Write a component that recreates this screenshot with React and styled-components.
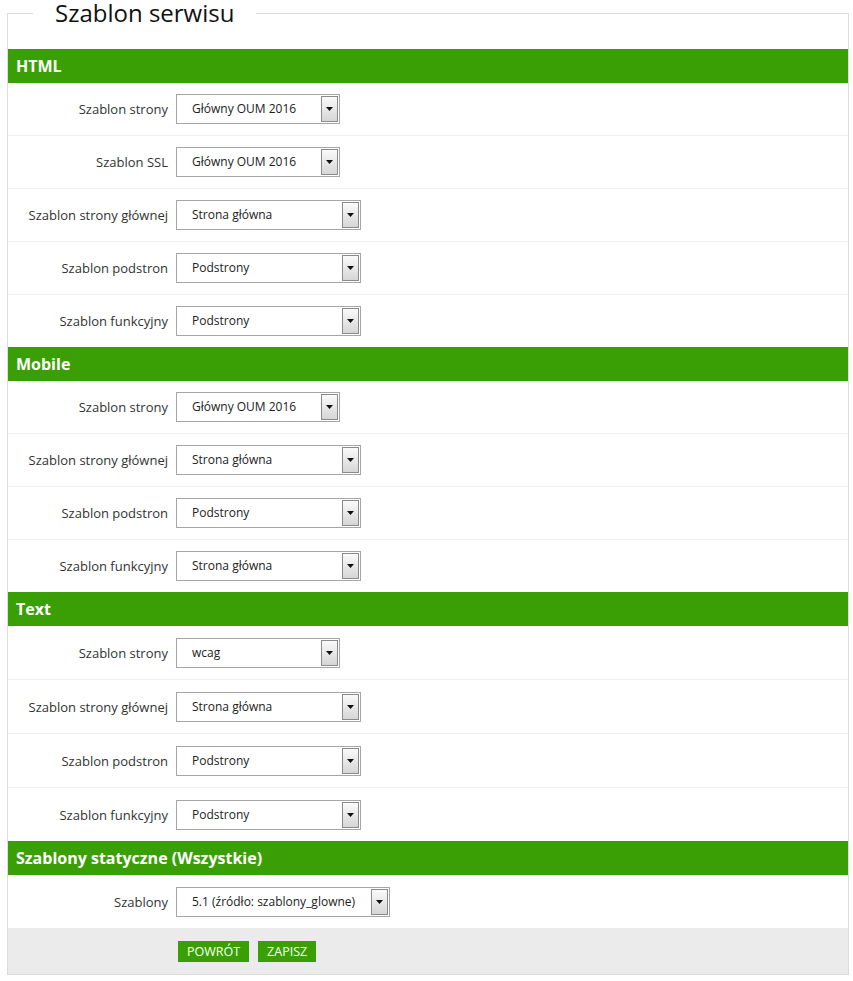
import React from 'react'
import styled, { createGlobalStyle } from 'styled-components'

const Global = createGlobalStyle`
  body {
    margin: 0;
    background: #fff;
    font-family: "Open Sans", "DejaVu Sans", sans-serif;
    color: #333;
  }
`

const sections = [
  {
    title: 'HTML',
    rowHeight: 52,
    rows: [
      ['Szablon strony', 'Główny OUM 2016', 164],
      ['Szablon SSL', 'Główny OUM 2016', 164],
      ['Szablon strony głównej', 'Strona główna', 185],
      ['Szablon podstron', 'Podstrony', 185],
      ['Szablon funkcyjny', 'Podstrony', 185],
    ],
  },
  {
    title: 'Mobile',
    rowHeight: 52,
    rows: [
      ['Szablon strony', 'Główny OUM 2016', 164],
      ['Szablon strony głównej', 'Strona główna', 185],
      ['Szablon podstron', 'Podstrony', 185],
      ['Szablon funkcyjny', 'Strona główna', 185],
    ],
  },
  {
    title: 'Text',
    rowHeight: 53,
    rows: [
      ['Szablon strony', 'wcag', 164],
      ['Szablon strony głównej', 'Strona główna', 185],
      ['Szablon podstron', 'Podstrony', 185],
      ['Szablon funkcyjny', 'Podstrony', 185],
    ],
  },
  {
    title: 'Szablony statyczne (Wszystkie)',
    rowHeight: 53,
    rows: [['Szablony', '5.1 (źródło: szablony_glowne)', 214]],
  },
]

function Select({ value, width }) {
  return (
    <SelectBox $width={width}>
      <SelectValue>{value}</SelectValue>
      <Arrow>
        <svg width="7" height="4" viewBox="0 0 7 4">
          <path d="M0 0h7L3.5 4z" fill="#111" />
        </svg>
      </Arrow>
    </SelectBox>
  )
}

function App() {
  return (
    <Page>
      <Global />
      <Fieldset>
        <Legend>Szablon serwisu</Legend>
        <Body>
          {sections.map((s) => (
            <Section key={s.title}>
              <Header>{s.title}</Header>
              {s.rows.map(([label, value, w], i) => (
                <Row key={i} $height={s.rowHeight}>
                  <Label>{label}</Label>
                  <Select value={value} width={w} />
                </Row>
              ))}
            </Section>
          ))}
          <Footer>
            <Button>Powrót</Button>
            <Button>Zapisz</Button>
          </Footer>
        </Body>
      </Fieldset>
    </Page>
  )
}

export default App

const Page = styled.div`
  padding: 0 4px 6px 7px;
`

const Fieldset = styled.fieldset`
  margin: 0;
  padding: 0;
  width: 842px;
  box-sizing: border-box;
  border: 1px solid #dcdcdc;
  min-width: 0;
`

const Legend = styled.legend`
  margin-left: 25px;
  padding: 0 22px;
  font-size: 24px;
  font-weight: 500;
  line-height: 26px;
  color: #111;
`

const Body = styled.div`
  padding-top: 23px;
`

const Section = styled.div`
  display: flex;
  flex-direction: column;
`

const Header = styled.div`
  height: 34px;
  background: #3a9f04;
  color: #fff;
  font-weight: 700;
  font-size: 16px;
  line-height: 34px;
  padding-left: 8px;
`

const Row = styled.div`
  display: grid;
  grid-template-columns: 160px auto;
  column-gap: 8px;
  align-items: center;
  height: ${(p) => p.$height}px;
  & + & {
    border-top: 1px solid #eeeeee;
  }
`

const Label = styled.div`
  text-align: right;
  font-size: 13px;
`

const SelectBox = styled.div`
  display: flex;
  align-items: stretch;
  width: ${(p) => p.$width}px;
  height: 30px;
  box-sizing: border-box;
  border: 1px solid #a6a6a6;
  background: #fff;
`

const SelectValue = styled.div`
  flex: 1;
  padding-left: 15px;
  font-size: 12px;
  line-height: 28px;
  color: #222;
  white-space: nowrap;
  overflow: hidden;
`

const Arrow = styled.div`
  width: 15px;
  margin: 1px;
  border: 1px solid #8a8a8a;
  background: linear-gradient(#fafafa, #d6d6d6);
  display: flex;
  align-items: center;
  justify-content: center;
`

const Footer = styled.div`
  display: flex;
  gap: 9px;
  padding: 13px 0 12px 170px;
  background: #ebebeb;
`

const Button = styled.div`
  background: #3a9f04;
  color: #fff;
  text-transform: uppercase;
  font-size: 12.5px;
  line-height: 21px;
  padding: 0 9px;
`
